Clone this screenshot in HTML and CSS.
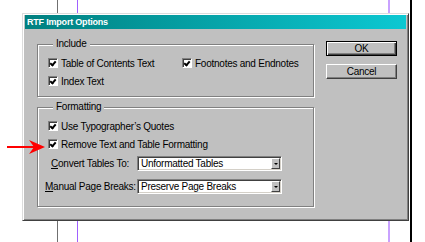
FILE: index.html
```html
<!DOCTYPE html>
<html>
<head>
    <title>RTF Import Options</title>
    <link rel="stylesheet" href="styles.css">
</head>
<body>
    <div id="canvas">
        <div class="guide guide-gray" style="left: 57px"></div>
        <div class="guide guide-purple" style="left: 77px"></div>
        <div class="guide guide-lilac" style="left: 388px"></div>
        <div class="guide guide-black" style="left: 410px"></div>

        <div id="dialog">
            <div class="titlebar">RTF Import Options</div>
            <div class="dialog-body">
                <div class="groups">
                    <fieldset class="group group-include">
                        <legend>Include</legend>
                        <label class="check"><span class="box on"></span>Table of Contents Text</label>
                        <label class="check"><span class="box on"></span>Footnotes and Endnotes</label>
                        <label class="check"><span class="box on"></span>Index Text</label>
                    </fieldset>
                    <fieldset class="group group-format">
                        <legend>Formatting</legend>
                        <label class="check"><span class="box on"></span>Use Typographer’s Quotes</label>
                        <label class="check"><span class="box on"></span>Remove Text and Table Formatting</label>
                        <div class="fields">
                            <span class="field-label"><u>C</u>onvert Tables To:</span>
                            <div class="select"><span>Unformatted Tables</span><span class="drop"></span></div>
                            <span class="field-label"><u>M</u>anual Page Breaks:</span>
                            <div class="select"><span>Preserve Page Breaks</span><span class="drop"></span></div>
                        </div>
                    </fieldset>
                </div>
                <div class="buttons">
                    <button class="btn default">OK</button>
                    <button class="btn">Cancel</button>
                </div>
            </div>
        </div>

        <svg class="pointer" width="40" height="14" viewBox="0 0 40 14">
            <path d="M0 6h30v2H0z" fill="#f00"/>
            <path d="M22 0 L38 7 L22 14 L27 7 Z" fill="#f00"/>
        </svg>
    </div>
</body>
</html>
```

FILE: styles.css
```css
body {
  margin: 0;
  background: #fff;
  font-family: "Liberation Sans", Arial, sans-serif;
  font-size: 10px;
  letter-spacing: -0.25px;
  color: #000;
}

#canvas {
  position: relative;
  width: 425px;
  height: 242px;
  overflow: hidden;
  padding-top: 13px;
  box-sizing: border-box;
}

.guide {
  position: absolute;
  top: 0;
  bottom: 0;
  width: 1px;
}

.guide-gray { background: #707070; }
.guide-purple { background: #a060ff; }
.guide-lilac { background: #c9a2ff; width: 2px; }
.guide-black { background: #000; width: 2px; }

#dialog {
  position: relative;
  margin-left: 22px;
  width: 387px;
  height: 208px;
  box-sizing: border-box;
  background: #c0c0c0;
  border: 1px solid;
  border-color: #dcdcdc #404040 #404040 #dcdcdc;
  box-shadow: inset 1px 1px 0 #fff, inset -1px -1px 0 #808080;
  padding: 1px 2px;
}

.titlebar {
  height: 14px;
  line-height: 14px;
  padding-left: 2px;
  background: linear-gradient(to right, #008080, #0cc8d2);
  color: #fff;
  font-weight: bold;
  font-size: 9px;
  letter-spacing: -0.2px;
}

.dialog-body {
  display: flex;
  padding: 9px 0 0 12px;
  gap: 12px;
}

.groups {
  width: 277px;
}

.group {
  margin: 0;
  padding: 4px 0 0 10px;
  border: 1px solid #808080;
  box-shadow: inset 1px 1px 0 #fff, 1px 1px 0 #fff;
}

.group legend {
  margin-left: 5px;
  padding: 0 3px;
  line-height: 12px;
  background: #c0c0c0;
}

.group-include {
  display: grid;
  grid-template-columns: 134px 1fr;
  grid-auto-rows: 18px;
  padding-bottom: 6px;
  margin-bottom: 4px;
}

.group-format {
  padding-bottom: 12px;
}

.check {
  display: flex;
  align-items: center;
  gap: 3px;
  height: 18px;
}

.box {
  width: 10px;
  height: 10px;
  box-sizing: border-box;
  background: #fff;
  border: 1px solid;
  border-color: #808080 #fff #fff #808080;
  box-shadow: inset 1px 1px 0 #404040;
  position: relative;
}

.box.on::after {
  content: "";
  position: absolute;
  left: 2px;
  top: 1px;
  width: 2px;
  height: 4px;
  border: solid #000;
  border-width: 0 2px 2px 0;
  transform: rotate(40deg);
  transform-origin: center;
}

.fields {
  display: grid;
  grid-template-columns: 84px 145px;
  column-gap: 8px;
  row-gap: 8px;
  align-items: center;
  margin: 3px 0 0 -3px;
}

.field-label {
  text-align: right;
  white-space: nowrap;
}

.select {
  height: 15px;
  box-sizing: border-box;
  display: flex;
  align-items: center;
  justify-content: space-between;
  background: #fff;
  border: 1px solid;
  border-color: #808080 #fff #fff #808080;
  box-shadow: inset 1px 1px 0 #404040, inset -1px -1px 0 #d4d0c8;
  padding: 0 1px 0 3px;
}

.drop {
  width: 9px;
  height: 11px;
  box-sizing: border-box;
  background: #c0c0c0;
  border: 1px solid;
  border-color: #fff #404040 #404040 #fff;
  position: relative;
}

.drop::after {
  content: "";
  position: absolute;
  left: 2px;
  top: 4px;
  border: 2px solid transparent;
  border-top: 2px solid #000;
  border-bottom: 0;
}

.buttons {
  display: flex;
  flex-direction: column;
  gap: 8px;
  padding-top: 3px;
}

.btn {
  width: 71px;
  height: 15px;
  padding: 0;
  font: inherit;
  letter-spacing: inherit;
  color: #000;
  background: #c0c0c0;
  border: 1px solid;
  border-color: #fff #404040 #404040 #fff;
  box-shadow: inset -1px -1px 0 #808080;
}

.btn.default {
  border: 1px solid #000;
  box-shadow: inset 1px 1px 0 #fff, inset -1px -1px 0 #404040, inset -2px -2px 0 #808080;
}

.pointer {
  position: absolute;
  left: 7px;
  top: 140px;
}
```
